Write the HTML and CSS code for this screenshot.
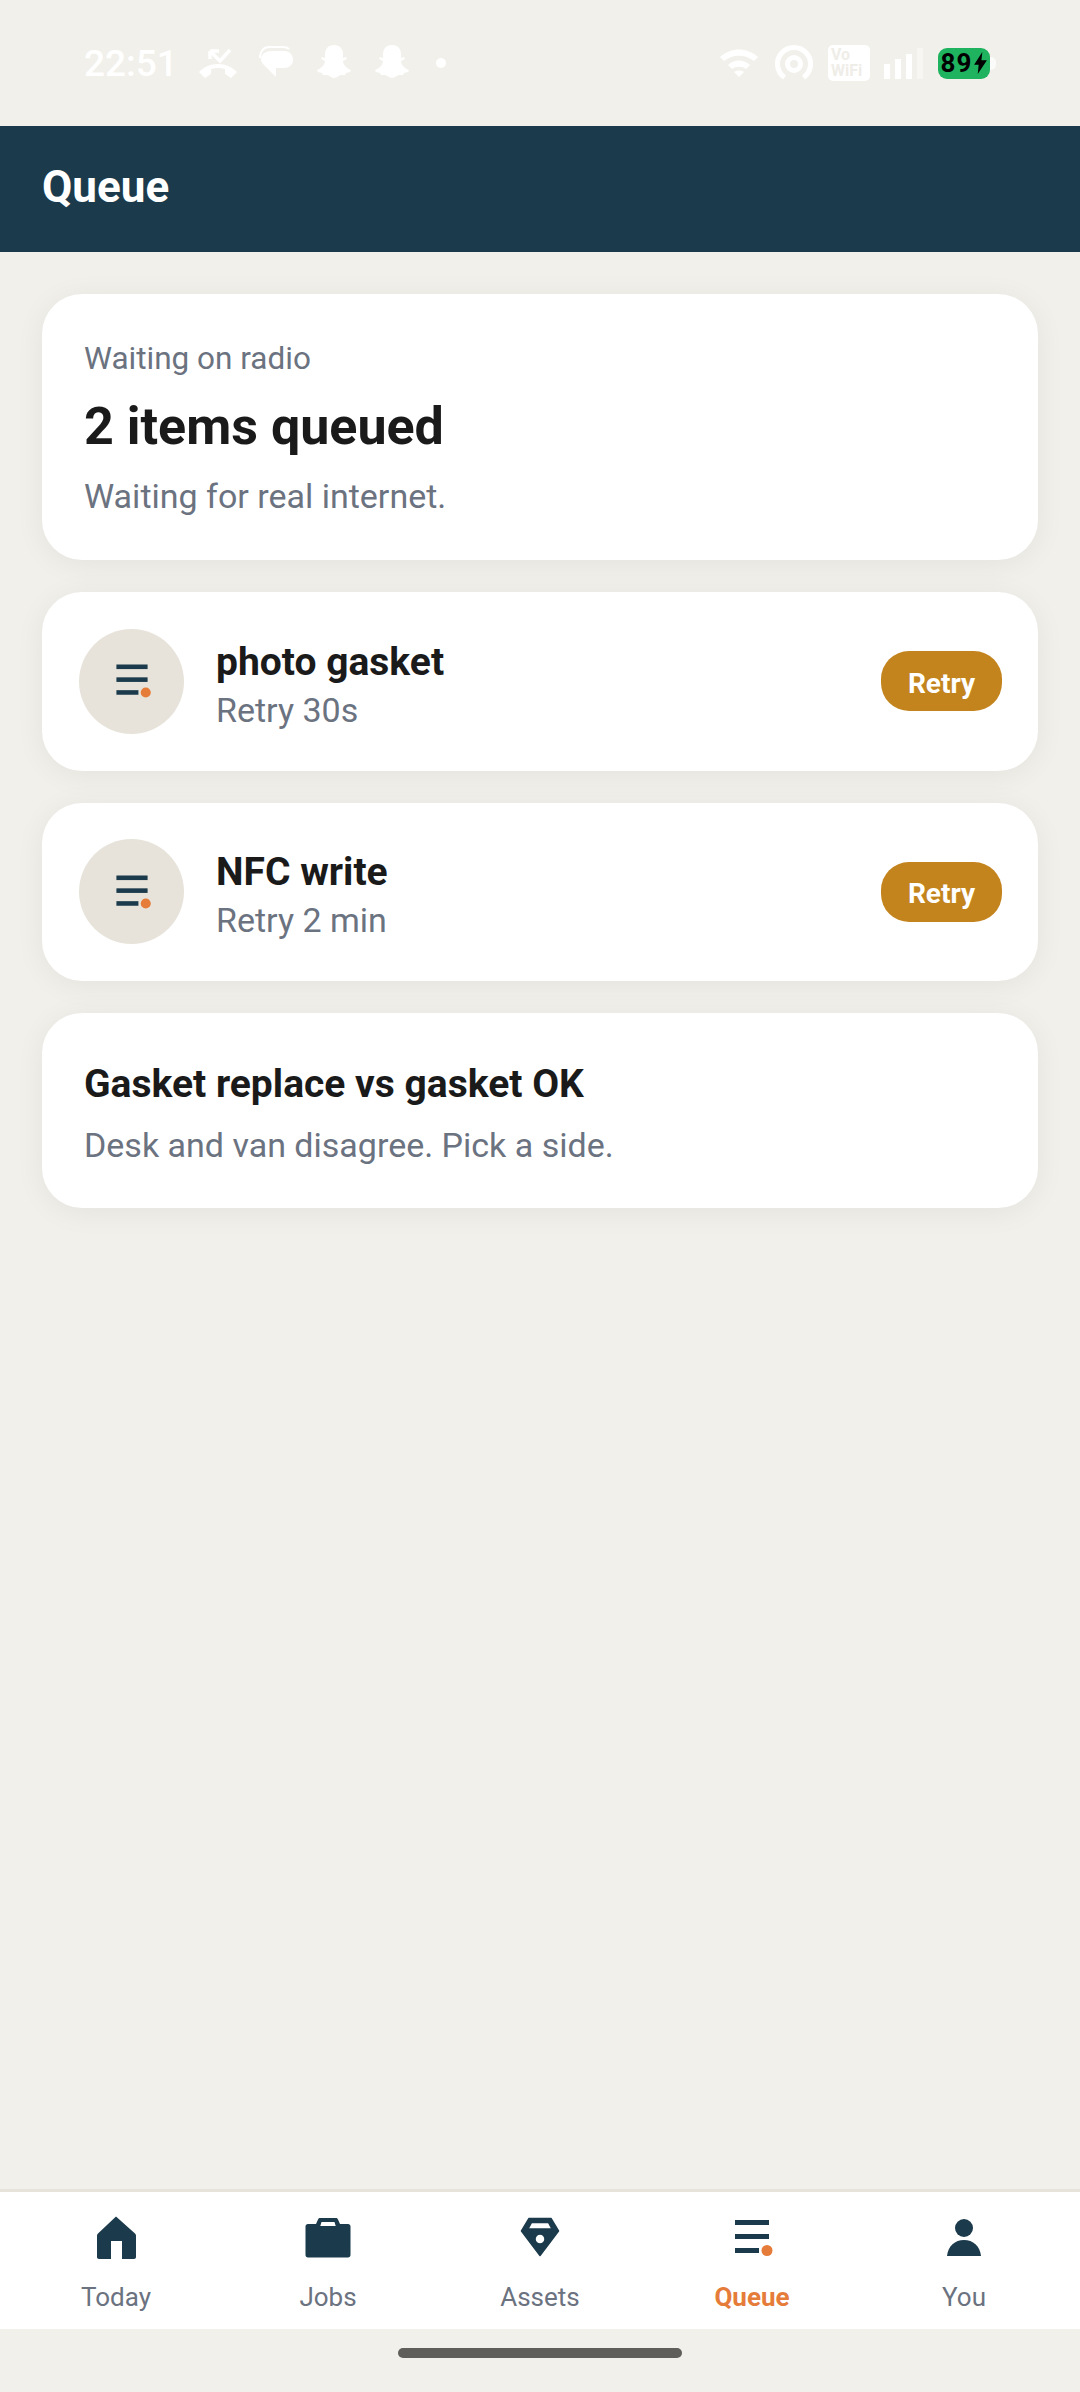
FILE: index.html
```html
<!DOCTYPE html>
<html lang="en">
<head>
  <meta charset="UTF-8">
  <meta name="viewport" content="width=device-width, initial-scale=1.0">
  <title>Queue</title>
  <link rel="stylesheet" href="styles.css">
</head>
<body>
  <div class="statusbar">
    <div class="status-left">
      <span class="time">22:51</span>
      <svg class="ic-call" viewBox="0 0 40 36"><path d="M1 27c5-5 11-8 19-8s14 3 19 8l-6 6-6-4v-5c-4-1.500-10-1.500-14 0v5l-6 4z" fill="#fff"/><path d="M12 6h9M12 6v8M12 6l10 10L32 5" fill="none" stroke="#fff" stroke-width="3.500"/></svg>
      <svg class="ic-chat" viewBox="0 0 34 36"><path d="M1 13C1 6 5 2 10 2H24c3 0 5 1 6 2" fill="none" stroke="#fff" stroke-width="2"/><path d="M12 6h13c5 0 9 3 9 8.500S30 23 25 23h-8v9L5 20c-2-2-3-4-3-6 0-5 5-8 10-8z" fill="#fff"/></svg>
      <svg class="ic-snap" viewBox="0 0 36 36"><path d="M18 0c6 0 9 4 9 9v4l3-1 1 2-4 2c0 3 3 7 8 9l-1 2-4 1-1 2-4 0c-2 0-4 3-7 3s-5-3-7-3l-4 0-1-2-4-1-1-2c5-2 8-6 8-9l-4-2 1-2 3 1V9c0-5 3-9 9-9z" fill="#fff"/></svg>
      <svg class="ic-snap" viewBox="0 0 36 36"><path d="M18 0c6 0 9 4 9 9v4l3-1 1 2-4 2c0 3 3 7 8 9l-1 2-4 1-1 2-4 0c-2 0-4 3-7 3s-5-3-7-3l-4 0-1-2-4-1-1-2c5-2 8-6 8-9l-4-2 1-2 3 1V9c0-5 3-9 9-9z" fill="#fff"/></svg>
      <span class="status-dot"></span>
    </div>
    <div class="status-right">
      <svg class="ic-wifi" viewBox="0 0 40 30"><path d="M1 9c11-10 27-10 38 0l-4 4C26 6 14 6 5 13z" fill="#fff"/><path d="M9 17c6-6 16-6 22 0l-4 4c-4-3-10-3-14 0z" fill="#fff"/><path d="M15 24c3-2 7-2 10 0l-5 5z" fill="#fff"/></svg>
      <svg class="ic-hotspot" viewBox="0 0 38 36"><circle cx="19" cy="19" r="6.500" fill="none" stroke="#fff" stroke-width="5"/><path d="M9.500 32.500A16.500 16.500 0 1 1 28.500 32.500" fill="none" stroke="#fff" stroke-width="5"/></svg>
      <div class="vowifi">Vo<br>WiFi</div>
      <div class="signal">
        <span class="bar bar1"></span>
        <span class="bar bar2"></span>
        <span class="bar bar3"></span>
        <span class="bar bar4"></span>
      </div>
      <div class="battery">89<svg class="bolt" viewBox="0 0 14 24"><path d="M9 0L0 14h5l-1 10 10-15H8z" fill="#000"/></svg></div>
    </div>
  </div>

  <div class="header">Queue</div>

  <div class="contenu">
    <div class="carte resume">
      <div class="petit">Waiting on radio</div>
      <div class="gros">2 items queued</div>
      <div class="sous">Waiting for real internet.</div>
    </div>

    <div class="carte ligne">
      <div class="avatar">
        <svg class="ic-avatar" viewBox="0 0 48 48"><use href="#queue-ic"/></svg>
      </div>
      <div class="infos">
        <div class="titre">photo gasket</div>
        <div class="sous">Retry 30s</div>
      </div>
      <button class="retry">Retry</button>
    </div>

    <div class="carte ligne">
      <div class="avatar">
        <svg class="ic-avatar" viewBox="0 0 48 48"><use href="#queue-ic"/></svg>
      </div>
      <div class="infos">
        <div class="titre">NFC write</div>
        <div class="sous">Retry 2 min</div>
      </div>
      <button class="retry">Retry</button>
    </div>

    <div class="carte conflit">
      <div class="titre-conflit">Gasket replace vs gasket OK</div>
      <div class="sous">Desk and van disagree. Pick a side.</div>
    </div>
  </div>

  <div class="nav">
    <div class="nav-item">
      <svg class="nav-ic" viewBox="0 0 48 48"><path d="M24 2.500L43 19.500c.6.6 1 1.200 1 2V43c0 1.200-.8 2-2 2H30V27H19v18H7c-1.200 0-2-.8-2-2V21.500c0-.8.400-1.400 1-2z" fill="#1b3a4b"/></svg>
      <span>Today</span>
    </div>
    <div class="nav-item">
      <svg class="nav-ic" viewBox="0 0 48 48"><path fill-rule="evenodd" d="M16 4h16c1 0 1.500.5 2 1.500L36 10h8c1.500 0 2.500 1 2.500 2.500V41c0 1.500-1 2.500-2.500 2.500H4c-1.500 0-2.500-1-2.500-2.500V12.500C1.500 11 2.500 10 4 10h8l2-4.500C14.500 4.500 15 4 16 4zM17.500 8l-1.200 4h15.400l-1.200-4z" fill="#1b3a4b"/></svg>
      <span>Jobs</span>
    </div>
    <div class="nav-item">
      <svg class="nav-ic" viewBox="0 0 48 48"><path fill-rule="evenodd" stroke="#1b3a4b" stroke-width="1.500" stroke-linejoin="round" d="M13 4.500h22L42.500 17 24 41.500 5.500 17zM15.500 8.500L12 15h24l-3.500-6.500zM24 20a5 5 0 1 0 0 10 5 5 0 0 0 0-10z" fill="#1b3a4b"/></svg>
      <span>Assets</span>
    </div>
    <div class="nav-item actif">
      <svg class="nav-ic" viewBox="0 0 48 48"><g id="queue-ic"><rect x="7" y="6" width="34" height="5" fill="#1b3a4b"/><rect x="7" y="20" width="34" height="5" fill="#1b3a4b"/><rect x="7" y="34" width="24" height="5" fill="#1b3a4b"/><circle cx="39" cy="36.500" r="5.500" fill="#e57c3a"/></g></svg>
      <span>Queue</span>
    </div>
    <div class="nav-item">
      <svg class="nav-ic" viewBox="0 0 48 48"><circle cx="24" cy="14" r="9" fill="#1b3a4b"/><path d="M7 42c1-10 8-16 17-16s16 6 17 16z" fill="#1b3a4b"/></svg>
      <span>You</span>
    </div>
  </div>

  <div class="gesture">
    <div class="home-bar"></div>
  </div>
</body>
</html>
```

FILE: styles.css
```css
* {
  box-sizing: border-box;
}
body {
  display: flex;
  flex-direction: column;
  height: 2392px;
  margin: 0;
  background-color: #f2f0eb;
  font-family: Roboto, sans-serif;
  overflow: hidden;
}
svg {
  display: block;
  flex: none;
}

/* barre d'etat */
.statusbar {
  display: flex;
  justify-content: space-between;
  align-items: center;
  height: 126px;
  padding: 0 90px 0 84px;
}
.status-left,
.status-right {
  display: flex;
  align-items: center;
}
.time {
  width: 114px;
  color: #fff;
  font-size: 37px;
  font-weight: 500;
}
.ic-call {
  width: 40px;
  height: 36px;
  margin-right: 21px;
}
.ic-chat {
  width: 34px;
  height: 36px;
  margin-right: 23px;
}
.ic-snap {
  width: 36px;
  height: 36px;
  margin-right: 22px;
}
.status-dot {
  width: 10px;
  height: 10px;
  margin-left: 4px;
  border-radius: 50%;
  background-color: #fff;
}
.ic-wifi {
  width: 40px;
  height: 30px;
  margin-right: 16px;
}
.ic-hotspot {
  width: 38px;
  height: 36px;
  margin-right: 15px;
}
.vowifi {
  width: 42px;
  height: 36px;
  margin-right: 14px;
  padding: 2px 0 0 3px;
  border-radius: 5px;
  background-color: #fff;
  color: #efede8;
  font-size: 16px;
  font-weight: 700;
  line-height: 16px;
}
.signal {
  display: flex;
  align-items: flex-end;
  gap: 5px;
  height: 31px;
  margin-right: 15px;
}
.bar {
  width: 6px;
  background-color: #fff;
}
.bar1 {
  height: 15px;
}
.bar2 {
  height: 20px;
}
.bar3 {
  height: 25px;
}
.bar4 {
  height: 31px;
  opacity: 0.4;
}
.battery {
  position: relative;
  display: flex;
  justify-content: center;
  align-items: center;
  gap: 2px;
  width: 52px;
  height: 31px;
  border-radius: 9px;
  background-color: #1fb35f;
  color: #000;
  font-size: 26px;
  font-weight: 700;
  letter-spacing: 1px;
}
.battery::after {
  content: "";
  position: absolute;
  top: 9px;
  right: -6px;
  width: 6px;
  height: 13px;
  border-radius: 0 5px 5px 0;
  background-color: #fff;
  opacity: 0.7;
}
.bolt {
  width: 13px;
  height: 22px;
}

.header {
  display: flex;
  align-items: center;
  height: 126px;
  padding: 0 0 4px 42px;
  background-color: #1b3a4b;
  color: #fff;
  font-size: 44px;
  font-weight: 700;
}

.contenu {
  flex: 1;
  display: flex;
  flex-direction: column;
  gap: 32px;
  padding: 42px 42px 0;
}
.carte {
  background-color: #fff;
  border-radius: 40px;
  box-shadow: 0 4px 30px rgba(0, 0, 0, 0.06);
}
.resume {
  height: 266px;
  padding: 47px 42px 0;
}
.petit {
  color: #6b7280;
  font-size: 31.5px;
  line-height: 36px;
}
.gros {
  margin-top: 20px;
  color: #1a1a1a;
  font-size: 52px;
  font-weight: 700;
  line-height: 60px;
}
.sous {
  color: #6b7280;
  font-size: 34px;
  line-height: 40px;
}
.resume .sous {
  margin-top: 19px;
}
.ligne {
  display: flex;
  align-items: center;
  height: 178.5px;
  padding: 0 36px 0 37px;
}
.avatar {
  display: flex;
  justify-content: center;
  align-items: center;
  width: 105px;
  height: 105px;
  border-radius: 50%;
  background-color: #e7e3da;
}
.ic-avatar {
  width: 44px;
  height: 44px;
}
.infos {
  flex: 1;
  margin-left: 32px;
  padding-top: 6px;
}
.infos .sous {
  margin-top: 5px;
}
.titre {
  color: #1a1a1a;
  font-size: 39px;
  font-weight: 700;
  line-height: 46px;
}
.retry {
  width: 121px;
  height: 60px;
  padding: 4px 0 0;
  border: none;
  border-radius: 28px;
  background-color: #c4841d;
  color: #fff;
  font-family: Roboto, sans-serif;
  font-size: 28px;
  font-weight: 700;
}
.conflit {
  height: 195px;
  padding: 49px 42px 0;
}
.titre-conflit {
  margin-bottom: 19px;
  color: #1a1a1a;
  font-size: 39px;
  font-weight: 700;
  line-height: 44px;
}

/* navigation du bas */
.nav {
  display: flex;
  height: 140px;
  padding: 22px 10px 0;
  border-top: 3px solid #e7e3da;
  background-color: #fff;
}
.nav-item {
  flex: 1;
  display: flex;
  flex-direction: column;
  align-items: center;
  color: #6b7280;
  font-size: 26px;
  line-height: 32px;
}
.nav-ic {
  width: 48px;
  height: 48px;
  margin-bottom: 19px;
}
.nav-item.actif {
  color: #e57c3a;
  font-weight: 700;
}
.gesture {
  display: flex;
  justify-content: center;
  height: 63px;
  padding-top: 19px;
}
.home-bar {
  width: 284px;
  height: 10px;
  border-radius: 5px;
  background-color: #5f5e5a;
}
```
